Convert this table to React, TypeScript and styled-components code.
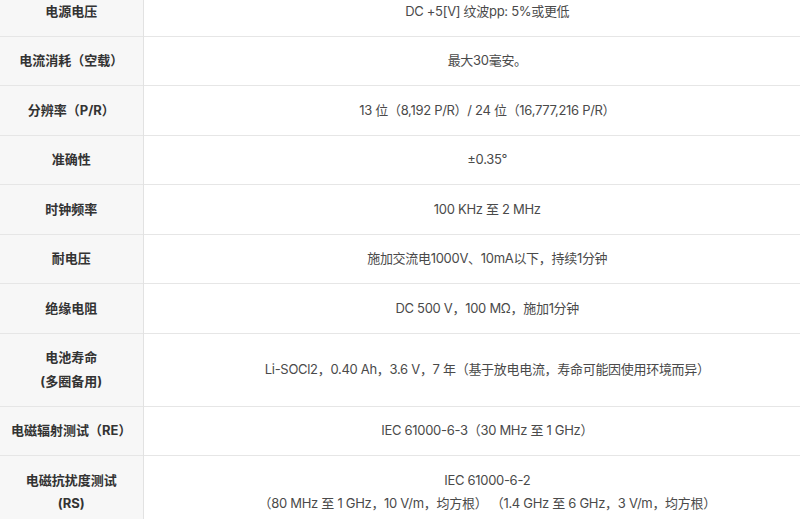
import React from 'react';
import styled, { createGlobalStyle } from 'styled-components';

const GlobalStyle = createGlobalStyle`
    html, body {
        margin: 0;
        padding: 0;
        background: #ffffff;
        overflow: hidden;
    }
    body {
        font-family: Inter, "Noto Sans CJK SC", sans-serif;
    }
`;

// the table is wider than the window; its right edge is cut off
const SpecTable = styled.table`
    width: 831px;
    margin-top: -13px;
    border-collapse: collapse;
    table-layout: fixed;
    font-size: 13px;
    line-height: 23.5px;
`;

const Row = styled.tr`
    border-bottom: 1px solid #e6e6e6;
`;

const Label = styled.th`
    box-sizing: border-box;
    width: 143px;
    padding: 12.5px 6px;
    background: #f7f7f7;
    border-right: 1px solid #e2e2e2;
    color: #333333;
    font-weight: 700;
    text-align: center;
    vertical-align: middle;
`;

const Value = styled.td`
    padding: 12.5px 16px;
    color: #4a4a4a;
    font-weight: 400;
    letter-spacing: -0.3px;
    text-align: center;
    vertical-align: middle;
`;

type Spec = {
    label: string[];
    value: string[];
};

const specs: Spec[] = [
    { label: ['电源电压'], value: ['DC +5[V] 纹波pp: 5%或更低'] },
    { label: ['电流消耗（空载）'], value: ['最大30毫安。'] },
    { label: ['分辨率（P/R）'], value: ['13 位（8,192 P/R）/ 24 位（16,777,216 P/R）'] },
    { label: ['准确性'], value: ['±0.35°'] },
    { label: ['时钟频率'], value: ['100 KHz 至 2 MHz'] },
    { label: ['耐电压'], value: ['施加交流电1000V、10mA以下，持续1分钟'] },
    { label: ['绝缘电阻'], value: ['DC 500 V，100 MΩ，施加1分钟'] },
    {
        label: ['电池寿命', '(多圈备用)'],
        value: ['Li-SOCl2，0.40 Ah，3.6 V，7 年（基于放电电流，寿命可能因使用环境而异）']
    },
    { label: ['电磁辐射测试（RE）'], value: ['IEC 61000-6-3（30 MHz 至 1 GHz）'] },
    {
        label: ['电磁抗扰度测试', '(RS)'],
        value: [
            'IEC 61000-6-2',
            '（80 MHz 至 1 GHz，10 V/m，均方根） （1.4 GHz 至 6 GHz，3 V/m，均方根）'
        ]
    }
];

const Lines = ({ lines }: { lines: string[] }) => (
    <>
        {lines.map((line, i) => (
            <React.Fragment key={i}>
                {i > 0 && <br />}
                {line}
            </React.Fragment>
        ))}
    </>
);

const App = () => {
    return (
        <>
            <GlobalStyle />
            <SpecTable>
                <tbody>
                    {specs.map((spec, i) => (
                        <Row key={i}>
                            <Label>
                                <Lines lines={spec.label} />
                            </Label>
                            <Value>
                                <Lines lines={spec.value} />
                            </Value>
                        </Row>
                    ))}
                </tbody>
            </SpecTable>
        </>
    );
};

export default App;
